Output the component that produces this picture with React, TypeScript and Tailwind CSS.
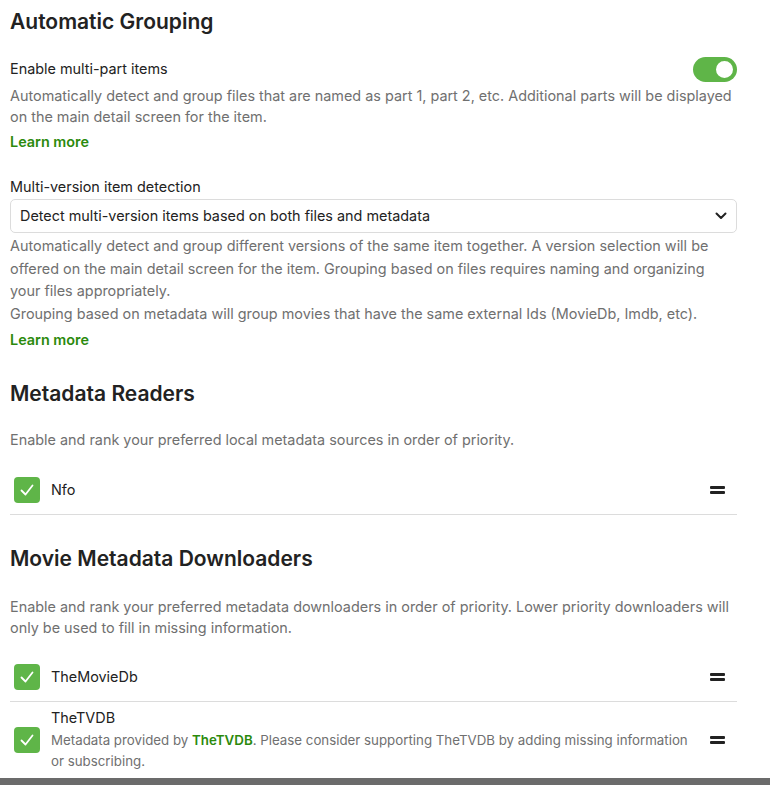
import React from "react";

const font = { fontFamily: "Inter, 'Noto Sans', sans-serif" };

function Check() {
  return (
    <div className="w-[26px] h-[26px] rounded-[4px] bg-[#5fb548] flex items-center justify-center shrink-0">
      <svg width="18" height="18" viewBox="0 0 18 18" fill="none">
        <path d="M3.5 9.5 L7.5 13.5 L14.5 4.5" stroke="white" strokeWidth="1.8" strokeLinecap="round" strokeLinejoin="round" />
      </svg>
    </div>
  );
}

function Handle() {
  return (
    <div className="flex flex-col gap-[2.5px] w-[15px] shrink-0">
      <div className="h-[2.5px] bg-[#222] rounded-[1px]" />
      <div className="h-[2.5px] bg-[#222] rounded-[1px]" />
    </div>
  );
}

export default function App() {
  return (
    <div className="h-[785px] flex flex-col bg-white text-[#222]" style={font}>
      <div className="flex-1 overflow-hidden">
        <div className="w-[727px] ml-[10px] pt-2">
          <h2 className="text-[21px] leading-[28px] font-semibold">Automatic Grouping</h2>

          <div className="mt-[21px] h-6 flex items-center justify-between">
            <span className="text-[14.4px] leading-5">Enable multi-part items</span>
            <div className="w-[44px] h-[25px] rounded-full bg-[#5fb548] flex items-center justify-end pr-[2px]">
              <div className="w-[21px] h-[21px] rounded-full bg-white border-[2px] border-[#5fb548]" />
            </div>
          </div>
          <p className="mt-1 text-[14.4px] leading-[21px] text-[#707070]">
            Automatically detect and group files that are named as part 1, part 2, etc. Additional parts will be displayed on the main detail screen for the item.
          </p>
          <div className="mt-[5px] text-[14.4px] leading-5 font-semibold text-[#2b8a0c]">Learn more</div>

          <div className="mt-[25px] text-[14.4px] leading-5">Multi-version item detection</div>
          <div className="mt-[2px] h-[34px] border border-[#dcdcdc] rounded-[5px] flex items-center justify-between pl-[9px] pr-[9px]">
            <span className="text-[14.4px]">Detect multi-version items based on both files and metadata</span>
            <svg width="12" height="8" viewBox="0 0 12 8" fill="none">
              <path d="M1.5 1.5 L6 6 L10.5 1.5" stroke="#222" strokeWidth="2" strokeLinecap="round" strokeLinejoin="round" />
            </svg>
          </div>
          <div className="mt-[2px] text-[14.4px] leading-[22.5px] text-[#707070]">
            <p>Automatically detect and group different versions of the same item together. A version selection will be offered on the main detail screen for the item. Grouping based on files requires naming and organizing your files appropriately.</p>
            <p>Grouping based on metadata will group movies that have the same external Ids (MovieDb, Imdb, etc).</p>
          </div>
          <div className="mt-[5px] text-[14.4px] leading-5 font-semibold text-[#2b8a0c]">Learn more</div>

          <h2 className="mt-[30px] text-[21px] leading-[28px] font-semibold">Metadata Readers</h2>
          <p className="mt-[21px] text-[14.4px] leading-[21px] text-[#707070]">
            Enable and rank your preferred local metadata sources in order of priority.
          </p>
          <div className="mt-[15px] pt-3 pb-[11px] pl-1 pr-3 border-b border-[#dcdcdc] flex items-center">
            <Check />
            <span className="ml-[11px] flex-1 text-[14.4px]">Nfo</span>
            <Handle />
          </div>

          <h2 className="mt-[30px] text-[21px] leading-[28px] font-semibold">Movie Metadata Downloaders</h2>
          <p className="mt-[23px] text-[14.4px] leading-[21px] text-[#707070]">
            Enable and rank your preferred metadata downloaders in order of priority. Lower priority downloaders will only be used to fill in missing information.
          </p>
          <div className="mt-[14px] pt-3 pb-[11px] pl-1 pr-3 border-b border-[#dcdcdc] flex items-center">
            <Check />
            <span className="ml-[11px] flex-1 text-[14.4px]">TheMovieDb</span>
            <Handle />
          </div>
          <div className="pt-[6px] pb-[6px] pl-1 pr-3 border-b border-[#dcdcdc] flex items-center">
            <Check />
            <div className="ml-[11px] flex-1 pr-3">
              <div className="text-[14.4px] leading-5">TheTVDB</div>
              <p className="mt-[2px] text-[13.3px] leading-[21px] text-[#707070]">
                Metadata provided by <strong className="font-semibold text-[#2b8a0c]">TheTVDB</strong>. Please consider supporting TheTVDB by adding missing information or subscribing.
              </p>
            </div>
            <Handle />
          </div>
        </div>
      </div>
      <div className="h-[7px] bg-[#6b6b6b]" />
    </div>
  );
}
